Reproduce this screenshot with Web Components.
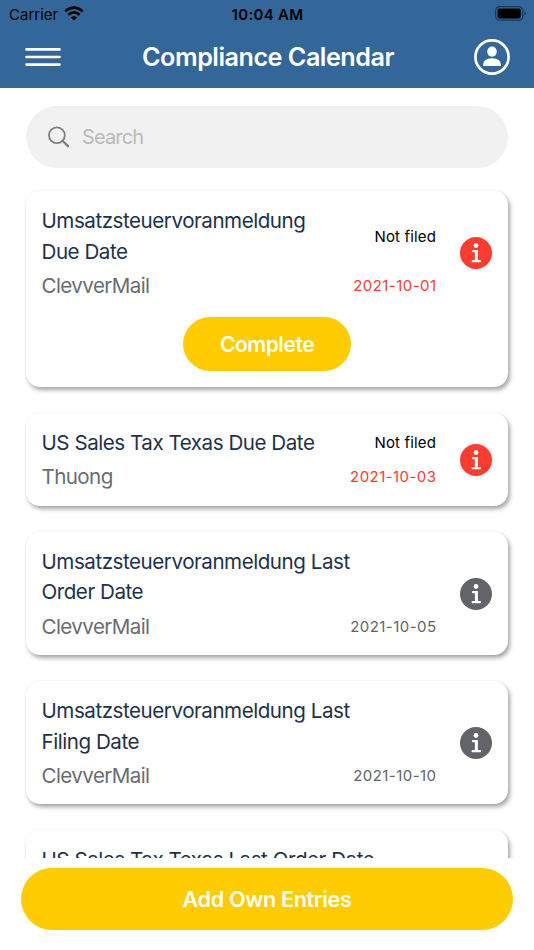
<!DOCTYPE html>
<html lang="en"><head><meta charset="utf-8"><title>Compliance Calendar</title>
<style>
html,body{margin:0;height:100%;background:#fff;overflow:hidden}
body{font-family:Inter,"Liberation Sans",sans-serif}
</style></head><body>
<calendar-app></calendar-app>
<script>
const define = (name, html) => customElements.define(name, class extends HTMLElement {
  constructor() {
    super();
    const t = document.createElement('template');
    t.innerHTML = html;
    this.attachShadow({ mode: 'open' }).append(t.content.cloneNode(true));
  }
});

define('status-bar', `<style>
:host{display:grid;grid-template-columns:1fr auto 1fr;align-items:center;height:27px;padding:0 8px 0 9px;color:#000;box-sizing:border-box}
.left{display:flex;align-items:center;gap:6px;font-size:15px}
.left span,.time{padding-top:1px}
.time{font-size:15px;font-weight:600;letter-spacing:.3px}
.battery{justify-self:end}
svg{display:block}
</style>
<div class="left"><span>Carrier</span>
<svg width="20" height="15" viewBox="0 0 20 15"><path d="M1.3 5.3Q10 -2.2 18.7 5.3M4.3 8.7Q10 4 15.7 8.7" fill="none" stroke="#000" stroke-width="2.7"/><path d="M10 14.6L6.9 11.5Q10 9 13.1 11.5Z"/></svg></div>
<div class="time">10:04 AM</div>
<svg class="battery" width="31" height="15" viewBox="0 0 31 15"><rect x=".7" y=".7" width="27" height="13.4" rx="3.6" fill="none" stroke="#1c3853" stroke-width="1.2"/><rect x="2.6" y="2.4" width="23.2" height="10" rx="1.8"/><path d="M29.5 5.3Q31 6 31 7.4T29.5 9.5Z" fill="#1c3853"/></svg>`);

define('nav-bar', `<style>
:host{display:flex;align-items:center;justify-content:space-between;height:60px;padding:0 24px 0 25px;box-sizing:border-box;color:#fff}
h1{margin:0;font-size:25.2px;font-weight:600;line-height:30px;letter-spacing:-.5px;white-space:nowrap;padding-left:1px}
svg{display:block}
</style>
<svg width="36" height="20" viewBox="0 0 36 20"><path d="M1.5 2.4H34.5M1.5 10H34.5M1.5 17.6H34.5" stroke="#fff" stroke-width="2.7" stroke-linecap="round"/></svg>
<h1><slot></slot></h1>
<svg width="36" height="36" viewBox="0 0 36 36" fill="#fff"><circle cx="18" cy="18" r="16.6" fill="none" stroke="#fff" stroke-width="2.7"/><ellipse cx="18" cy="12.6" rx="4.8" ry="5.1"/><path d="M9 26.3Q9 19.2 18 19.2T27 26.3Q27 27 26.3 27H9.7Q9 27 9 26.3Z"/></svg>`);

define('search-field', `<style>
:host{display:flex;align-items:center;gap:12px;height:62px;border-radius:31px;background:#f1f1f1;padding-left:22px;box-sizing:border-box;color:#b9b9bb;font-size:20px}
svg{display:block}
span{letter-spacing:-.85px}
</style>
<svg width="22" height="22" viewBox="0 0 22 22" fill="none" stroke="#7d7d82" stroke-linecap="round"><circle cx="8.9" cy="9.2" r="7.9" stroke-width="1.8"/><path d="M14.7 15L20 20.2" stroke-width="2.4"/></svg>
<span><slot></slot></span>`);

define('pill-button', `<style>
:host{display:flex;align-items:center;justify-content:center;height:54px;border-radius:31px;background:#fc0;color:#fff;font-size:21px;font-weight:600;letter-spacing:-.45px;white-space:nowrap;box-sizing:border-box}
</style><span><slot></slot></span>`);

define('info-icon', `<style>:host{display:block;width:32px;height:32px}svg{display:block}</style>
<svg width="32" height="32" viewBox="0 0 32 32"><circle cx="16" cy="16" r="16" fill="currentColor"/><g fill="#fff"><circle cx="16" cy="8.5" r="2.4"/><path d="M12.8 13.1H17.9V23.1H20.2Q21 23.1 21 24.2T20.2 25.3H12.4Q11.6 25.3 11.6 24.2T12.4 23.1H14.9V15.3H12.8Q12 15.3 12 14.2T12.8 13.1Z"/></g></svg>`);

define('entry-card', `<style>
:host{display:block;background:#fff;border-radius:14px;padding:14px 16px 13.5px;box-sizing:border-box;box-shadow:2px 3px 4px rgba(60,60,67,.46),0 0 3px rgba(0,0,0,.04);--tone:#636469}
:host([overdue]){--tone:#ff3b30}
.row{display:grid;grid-template-columns:minmax(0,1fr) 32px;align-items:center;column-gap:24px}
.main{display:grid;grid-template-columns:1fr auto;align-items:center}
.title{font-size:20.6px;line-height:30.6px;color:#1f3249;white-space:pre;letter-spacing:-.47px;padding-top:1px;margin-left:-.5px}
.owner{font-size:20.6px;line-height:30px;color:#6b6c71;padding-top:3.6px;letter-spacing:-.6px;margin-left:-.5px}
.status{font-size:15px;color:#000;text-align:right;letter-spacing:.15px}
.date{font-size:15px;color:var(--tone);text-align:right;padding-top:3px;letter-spacing:.45px;margin-right:-.5px}
info-icon{color:var(--tone)}
</style>
<div class="row"><div class="main">
<div class="title"><slot name="title"></slot></div><div class="status"><slot name="status"></slot></div>
<div class="owner"><slot name="owner">&nbsp;</slot></div><div class="date"><slot name="date"></slot></div>
</div><info-icon></info-icon></div>
<slot name="action"></slot>`);

define('calendar-app', `<style>
:host{display:flex;flex-direction:column;height:950px;background:#fff}
header{background:#336699;height:88px;flex:none}
main{flex:none;height:770px;padding:18px 26px 0;box-sizing:border-box;overflow:hidden}
.list{display:flex;flex-direction:column;gap:26px;margin-top:23.2px}
entry-card pill-button{width:168px;margin:16.4px auto 2.2px}
.last{height:123px}
.last [slot=title]{display:block;height:61.2px}
footer{padding:10px 21px 0}
footer pill-button{height:62px;font-size:21.7px;letter-spacing:-.4px}
</style>
<header><status-bar></status-bar><nav-bar>Compliance Calendar</nav-bar></header>
<main><search-field>Search</search-field>
<div class="list">
<entry-card overdue><span slot="title">Umsatzsteuervoranmeldung
Due Date</span><span slot="status">Not filed</span><span slot="owner">ClevverMail</span><span slot="date">2021-10-01</span><pill-button slot="action">Complete</pill-button></entry-card>
<entry-card overdue><span slot="title">US Sales Tax Texas Due Date</span><span slot="status">Not filed</span><span slot="owner">Thuong</span><span slot="date">2021-10-03</span></entry-card>
<entry-card><span slot="title">Umsatzsteuervoranmeldung Last
Order Date</span><span slot="owner">ClevverMail</span><span slot="date">2021-10-05</span></entry-card>
<entry-card><span slot="title">Umsatzsteuervoranmeldung Last
Filing Date</span><span slot="owner">ClevverMail</span><span slot="date">2021-10-10</span></entry-card>
<entry-card class="last"><span slot="title">US Sales Tax Texas Last Order Date</span></entry-card>
</div></main>
<footer><pill-button>Add Own Entries</pill-button></footer>`);
</script></body></html>
